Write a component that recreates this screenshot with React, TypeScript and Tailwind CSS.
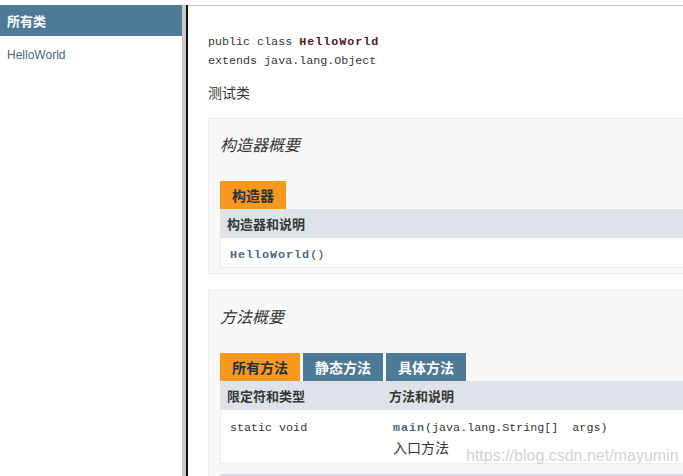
const MONO = "font-['Liberation_Mono',monospace] text-[11.7px]";
const CJK = "font-['Noto_Sans_CJK_SC','Noto_Sans',sans-serif]";

function Tab({ label, active }: { label: string; active?: boolean }) {
  return (
    <div
      className={`flex h-[28px] items-center px-[12px] text-[14px] font-bold ${CJK} ${
        active ? "bg-[#f8981d] text-[#253441]" : "bg-[#4d7a97] text-white"
      }`}
    >
      {label}
    </div>
  );
}

function Section({ title, children }: { title: string; children: React.ReactNode }) {
  return (
    <div className="w-[600px] shrink-0 border border-[#ededed] bg-[#f8f8f8] pt-[13px] pl-[11px]">
      <h3 className={`h-[24px] text-[16px] leading-[24px] italic text-[#353833] ${CJK}`}>{title}</h3>
      <div className="mt-[25px]">{children}</div>
    </div>
  );
}

export default function App() {
  return (
    <div className="relative flex h-[476px] w-[683px] flex-col overflow-hidden bg-white text-[#353833]">
      <div className="h-[5px] shrink-0 bg-white" />
      <div className="flex min-h-0 flex-1">
        {/* class list frame */}
        <div className="w-[182px] shrink-0">
          <div className={`flex h-[31px] items-center bg-[#4d7a97] pl-[7px] text-[13px] font-bold text-white ${CJK}`}>
            所有类
          </div>
          <div className="pt-[10px] pl-[7px] font-['Liberation_Sans',Arial,sans-serif] text-[12px] text-[#4a6782]">
            HelloWorld
          </div>
        </div>
        <div className="w-[4px] shrink-0 bg-[#c9c9c9]" />
        <div className="w-[2px] shrink-0 bg-[#111]" />

        {/* class frame */}
        <div className="min-w-0 flex-1 overflow-hidden border-t border-[#c0c0c0] pl-[20px]">
          <div className={`pt-[27px] leading-[19px] ${MONO}`}>
            <div>
              public class{" "}
              <span className="font-bold tracking-[1px] text-[#4b1c1c]">HelloWorld</span>
            </div>
            <div>extends java.lang.Object</div>
          </div>
          <p className={`mt-[11px] text-[14px] leading-[20px] ${CJK}`}>测试类</p>

          <div className="mt-[16px] flex flex-col gap-[16px]">
            <Section title="构造器概要">
              <div className="flex">
                <Tab label="构造器" active />
              </div>
              <div className={`flex h-[29px] items-center bg-[#dee3e9] pl-[7px] text-[13px] font-bold ${CJK}`}>
                构造器和说明
              </div>
              <div className="flex h-[30px] items-center border-b border-l border-[#eeeeee] bg-white pt-[6px] pl-[9px]">
                <span className={MONO}>
                  <span className="font-bold tracking-[1px] text-[#4a6782]">HelloWorld</span>()
                </span>
              </div>
              <div className="h-[5px]" />
            </Section>

            <Section title="方法概要">
              <div className="flex gap-[3px]">
                <Tab label="所有方法" active />
                <Tab label="静态方法" />
                <Tab label="具体方法" />
              </div>
              <div className={`flex h-[29px] items-center bg-[#dee3e9] text-[13px] font-bold ${CJK}`}>
                <div className="w-[162px] pl-[7px]">限定符和类型</div>
                <div className="pl-[7px]">方法和说明</div>
              </div>
              <div className="flex h-[54px] border-b border-l border-[#eeeeee] bg-white pt-[9px]">
                <div className={`w-[162px] pl-[9px] leading-[18px] ${MONO}`}>static void</div>
                <div className="pl-[10px]">
                  <div className={`leading-[18px] ${MONO}`}>
                    <span className="font-bold tracking-[1px] text-[#4a6782]">main</span>
                    (java.lang.String[]&nbsp;&nbsp;args)
                  </div>
                  <div className={`text-[14px] leading-[20px] ${CJK}`}>入口方法</div>
                </div>
              </div>
              <div className="mt-[10px] h-[2px] bg-[#d6dde6]" />
              <div className="h-[40px]" />
            </Section>
          </div>
        </div>
      </div>

      <div className="pointer-events-none absolute top-[446px] left-[466px] font-['Liberation_Sans',Arial,sans-serif] text-[16px] leading-[20px] text-[#d2d2d2] [text-shadow:0_0_1px_#fff]">
        https://blog.csdn.net/mayumin
      </div>
    </div>
  );
}
